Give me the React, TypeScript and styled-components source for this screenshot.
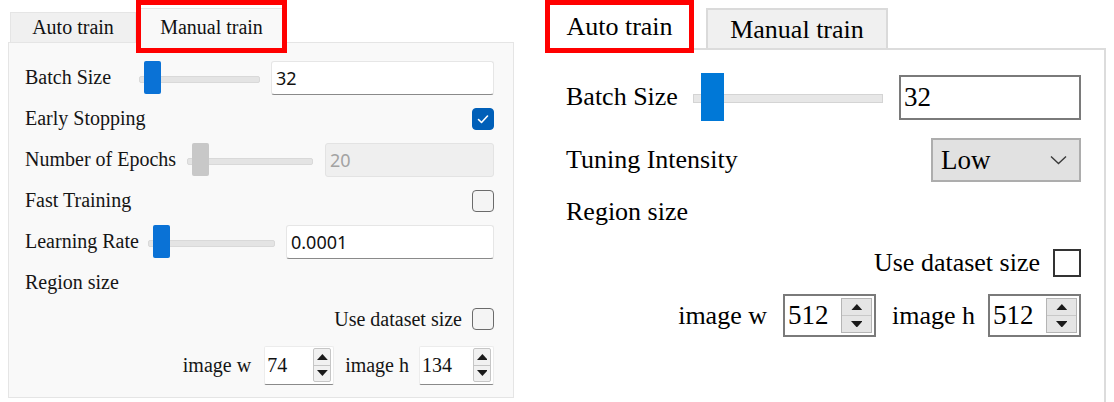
import React from 'react';
import styled, { createGlobalStyle, css } from 'styled-components';

const Global = createGlobalStyle`
  html, body { margin: 0; padding: 0; background: #fff; }
  body { font-family: "Liberation Serif", "Times New Roman", serif; color: #000; }
  * { box-sizing: border-box; }
`;

const Page = styled.div`
  display: flex;
  align-items: flex-start;
  width: 1114px;
  height: 402px;
  overflow: hidden;
  background: #fff;
`;

/* ---------- shared ---------- */
const Highlight = css<{ $hl?: boolean }>`
  ${(p) =>
    p.$hl &&
    css`
      &::after {
        content: '';
        position: absolute;
        border: 5px solid #f00;
        pointer-events: none;
      }
    `}
`;

const UpTri = ({ s = 1 }: { s?: number }) => (
  <svg width={9 * s} height={5 * s} viewBox="0 0 9 5">
    <polygon points="0,5 4.5,0 9,5" fill="#1a1a1a" />
  </svg>
);
const DownTri = ({ s = 1 }: { s?: number }) => (
  <svg width={9 * s} height={5 * s} viewBox="0 0 9 5">
    <polygon points="0,0 9,0 4.5,5" fill="#1a1a1a" />
  </svg>
);

/* ---------- left (fluent style) ---------- */
const LeftPane = styled.section`
  margin-left: 8px;
  width: 506px;
  display: flex;
  flex-direction: column;
`;

const LeftTabs = styled.div`
  display: flex;
  align-items: flex-end;
  height: 42px;
  padding-left: 2px;
`;

const LeftTab = styled.div<{ $active?: boolean; $hl?: boolean }>`
  position: relative;
  display: flex;
  align-items: center;
  justify-content: center;
  font-size: 20px;
  color: #111;
  border: 1px solid #e5e5e5;
  border-bottom: none;
  ${(p) =>
    p.$active
      ? css`
          width: 151px;
          height: 35px;
          margin-bottom: -1px;
          padding-top: 2px;
          background: #f9f9f9;
          z-index: 1;
        `
      : css`
          width: 126px;
          height: 30px;
          background: #f0f0f0;
        `}
  ${Highlight}
  &::after {
    top: -9px;
    bottom: -10px;
    left: -1px;
    right: -1px;
  }
`;

const LeftPanel = styled.div`
  height: 356px;
  border: 1px solid #e5e5e5;
  background: #f9f9f9;
  padding: 14px 19px 0 16px;
  display: flex;
  flex-direction: column;
`;

const LRow = styled.div<{ $h?: number; $mt?: number; $end?: boolean }>`
  display: flex;
  align-items: center;
  height: ${(p) => p.$h ?? 41}px;
  margin-top: ${(p) => p.$mt ?? 0}px;
  justify-content: ${(p) => (p.$end ? 'flex-end' : 'space-between')};
`;

const LLabel = styled.span<{ $w?: number; $ml?: number }>`
  font-size: 20px;
  color: #151515;
  white-space: nowrap;
  flex-shrink: 0;
  ${(p) => p.$w && `width: ${p.$w}px;`}
  margin-left: ${(p) => p.$ml ?? 0}px;
`;

const LSlider = styled.div<{ $w: number }>`
  position: relative;
  width: ${(p) => p.$w}px;
  height: 34px;
  flex-shrink: 0;
  display: flex;
  align-items: center;
  &::before {
    content: '';
    position: absolute;
    left: 0;
    right: 0;
    top: 50%;
    height: 5px;
    margin-top: -2px;
    background: #e4e4e4;
    border: 1px solid #d9d9d9;
    border-radius: 2px;
  }
`;

const LThumb = styled.div<{ $disabled?: boolean }>`
  position: relative;
  margin-left: 5px;
  width: 17px;
  height: 33px;
  border-radius: 2px;
  background: ${(p) => (p.$disabled ? '#c8c8c8' : '#0a72d6')};
`;

const LInput = styled.div<{ $disabled?: boolean; $gap: number }>`
  flex: 1;
  margin-left: ${(p) => p.$gap}px;
  height: 34px;
  display: flex;
  align-items: center;
  padding-left: 4px;
  font-family: "Noto Sans", "Open Sans", sans-serif;
  font-size: 18px;
  border-radius: 3px;
  ${(p) =>
    p.$disabled
      ? css`
          background: #efefef;
          border: 1px solid #e3e3e3;
          color: #a3a3a3;
        `
      : css`
          background: #fff;
          border: 1px solid #e6e6e6;
          border-bottom-color: #8a8a8a;
          color: #111;
        `}
`;

const LCheck = styled.span<{ $checked?: boolean; $ml?: number }>`
  width: 22px;
  height: 22px;
  border-radius: 4px;
  display: flex;
  align-items: center;
  justify-content: center;
  flex-shrink: 0;
  margin-left: ${(p) => p.$ml ?? 0}px;
  ${(p) =>
    p.$checked
      ? css`
          background: #005fb8;
          border: 1px solid #005fb8;
        `
      : css`
          background: #f4f4f4;
          border: 1px solid #6b6b6b;
        `}
`;

const LSpin = styled.div<{ $w: number; $ml: number }>`
  width: ${(p) => p.$w}px;
  margin-left: ${(p) => p.$ml}px;
  height: 39px;
  display: flex;
  align-items: center;
  justify-content: space-between;
  padding: 0 2px 0 2px;
  background: #fff;
  border: 1px solid #ececec;
  border-bottom: 1px solid #8a8a8a;
  border-radius: 2px;
  font-size: 20px;
  color: #111;
`;

const LSpinBtn = styled.div`
  width: 18px;
  height: 34px;
  display: flex;
  flex-direction: column;
  border: 1px solid #c6c6c6;
  border-radius: 2px;
  background: #f1f1f1;
`;

const SpinHalf = styled.div<{ $bottom?: boolean }>`
  flex: 1;
  display: flex;
  align-items: center;
  justify-content: center;
  ${(p) => p.$bottom && 'border-top: 1px solid #c6c6c6;'}
`;

/* ---------- right (classic style) ---------- */
const RightPane = styled.section`
  margin-left: 31px;
  width: 561px;
  display: flex;
  flex-direction: column;
`;

const RightTabs = styled.div`
  display: flex;
  align-items: flex-end;
  height: 48px;
`;

const RightTab = styled.div<{ $active?: boolean; $hl?: boolean }>`
  position: relative;
  display: flex;
  align-items: center;
  justify-content: center;
  font-size: 26px;
  color: #000;
  ${(p) =>
    p.$active
      ? css`
          width: 149px;
          height: 48px;
          padding-top: 6px;
          background: #fff;
        `
      : css`
          width: 182px;
          height: 40px;
          margin-left: 12px;
          padding-top: 2px;
          background: #f0f0f0;
          border: 2px solid #dadada;
          border-bottom: none;
        `}
  ${Highlight}
  &::after {
    top: 0;
    bottom: -5px;
    left: 0;
    right: 0;
  }
`;

const RightPanel = styled.div`
  height: 354px;
  background: #fff;
  border-top: 2px solid #dcdcdc;
  border-right: 2px solid #dcdcdc;
  padding: 23px 23px 0 21px;
  display: flex;
  flex-direction: column;
`;

const RRow = styled.div<{ $h: number; $mt?: number; $end?: boolean }>`
  display: flex;
  align-items: center;
  height: ${(p) => p.$h}px;
  margin-top: ${(p) => p.$mt ?? 0}px;
  justify-content: ${(p) => (p.$end ? 'flex-end' : 'space-between')};
`;

const RLabel = styled.span<{ $w?: number; $ml?: number }>`
  font-size: 26px;
  color: #000;
  white-space: nowrap;
  flex-shrink: 0;
  ${(p) => p.$w && `width: ${p.$w}px;`}
  margin-left: ${(p) => p.$ml ?? 0}px;
`;

const RSlider = styled.div`
  position: relative;
  width: 190px;
  height: 48px;
  flex-shrink: 0;
  display: flex;
  align-items: center;
  &::before {
    content: '';
    position: absolute;
    left: 0;
    right: 0;
    top: 50%;
    height: 7px;
    margin-top: -3px;
    background: #e7e7e7;
    border: 1px solid #d4d4d4;
  }
`;

const RThumb = styled.div`
  position: relative;
  margin-left: 8px;
  width: 23px;
  height: 48px;
  background: #0078d7;
`;

const RInput = styled.div`
  flex: 1;
  margin-left: 16px;
  height: 45px;
  display: flex;
  align-items: center;
  padding-left: 3px;
  border: 2px solid #7a7a7a;
  font-size: 27px;
  background: #fff;
`;

const RSelect = styled.div`
  width: 150px;
  height: 44px;
  display: flex;
  align-items: center;
  justify-content: space-between;
  padding: 0 12px 0 8px;
  background: #e1e1e1;
  border: 2px solid #adadad;
  font-size: 27px;
`;

const RCheck = styled.span<{ $ml: number }>`
  width: 28px;
  height: 28px;
  margin-left: ${(p) => p.$ml}px;
  border: 2px solid #333;
  background: #fff;
  flex-shrink: 0;
`;

const RSpin = styled.div<{ $ml: number }>`
  width: 93px;
  height: 43px;
  margin-left: ${(p) => p.$ml}px;
  display: flex;
  align-items: center;
  justify-content: space-between;
  padding: 0 2px 0 3px;
  border: 2px solid #7a7a7a;
  background: #fff;
  font-size: 27px;
`;

const RSpinBtn = styled.div`
  width: 31px;
  height: 35px;
  display: flex;
  flex-direction: column;
  background: #e5e5e5;
  border: 1px solid #b5b5b5;
`;

const RSpinHalf = styled.div<{ $bottom?: boolean }>`
  flex: 1;
  display: flex;
  align-items: center;
  justify-content: center;
  ${(p) => p.$bottom && 'border-top: 1px solid #c8c8c8;'}
`;

const Chevron = () => (
  <svg width="17" height="10" viewBox="0 0 17 10">
    <polyline points="1,1.5 8.5,8.5 16,1.5" fill="none" stroke="#3a3a3a" strokeWidth="1.4" />
  </svg>
);

const Check = () => (
  <svg width="14" height="14" viewBox="0 0 14 14">
    <polyline
      points="2.5,7.5 5.5,10.5 11.5,4"
      fill="none"
      stroke="#fff"
      strokeWidth="1.6"
      strokeLinecap="round"
      strokeLinejoin="round"
    />
  </svg>
);

const LeftSpin = ({ value, w, ml }: { value: string; w: number; ml: number }) => (
  <LSpin $w={w} $ml={ml}>
    <span>{value}</span>
    <LSpinBtn>
      <SpinHalf>
        <UpTri s={1.2} />
      </SpinHalf>
      <SpinHalf $bottom>
        <DownTri s={1.2} />
      </SpinHalf>
    </LSpinBtn>
  </LSpin>
);

const RightSpin = ({ value, ml }: { value: string; ml: number }) => (
  <RSpin $ml={ml}>
    <span>{value}</span>
    <RSpinBtn>
      <RSpinHalf>
        <UpTri s={1.3} />
      </RSpinHalf>
      <RSpinHalf $bottom>
        <DownTri s={1.3} />
      </RSpinHalf>
    </RSpinBtn>
  </RSpin>
);

export default function App() {
  return (
    <>
      <Global />
      <Page>
        <LeftPane>
          <LeftTabs>
            <LeftTab>Auto train</LeftTab>
            <LeftTab $active $hl>
              Manual train
            </LeftTab>
          </LeftTabs>
          <LeftPanel>
            <LRow>
              <LLabel $w={114}>Batch Size</LLabel>
              <LSlider $w={121}>
                <LThumb />
              </LSlider>
              <LInput $gap={11}>32</LInput>
            </LRow>
            <LRow>
              <LLabel>Early Stopping</LLabel>
              <LCheck $checked>
                <Check />
              </LCheck>
            </LRow>
            <LRow>
              <LLabel $w={162}>Number of Epochs</LLabel>
              <LSlider $w={126}>
                <LThumb $disabled />
              </LSlider>
              <LInput $gap={12} $disabled>
                20
              </LInput>
            </LRow>
            <LRow>
              <LLabel>Fast Training</LLabel>
              <LCheck />
            </LRow>
            <LRow>
              <LLabel $w={123}>Learning Rate</LLabel>
              <LSlider $w={127}>
                <LThumb />
              </LSlider>
              <LInput $gap={11}>0.0001</LInput>
            </LRow>
            <LRow>
              <LLabel>Region size</LLabel>
            </LRow>
            <LRow $h={32} $end>
              <LLabel>Use dataset size</LLabel>
              <LCheck $ml={10} />
            </LRow>
            <LRow $h={40} $mt={10} $end>
              <LLabel>image w</LLabel>
              <LeftSpin value="74" w={70} ml={13} />
              <LLabel $ml={11}>image h</LLabel>
              <LeftSpin value="134" w={75} ml={10} />
            </LRow>
          </LeftPanel>
        </LeftPane>

        <RightPane>
          <RightTabs>
            <RightTab $active $hl>
              Auto train
            </RightTab>
            <RightTab>Manual train</RightTab>
          </RightTabs>
          <RightPanel>
            <RRow $h={48}>
              <RLabel $w={127}>Batch Size</RLabel>
              <RSlider>
                <RThumb />
              </RSlider>
              <RInput>32</RInput>
            </RRow>
            <RRow $h={44} $mt={17}>
              <RLabel>Tuning Intensity</RLabel>
              <RSelect>
                <span>Low</span>
                <Chevron />
              </RSelect>
            </RRow>
            <RRow $h={30} $mt={15}>
              <RLabel>Region size</RLabel>
            </RRow>
            <RRow $h={28} $mt={22} $end>
              <RLabel>Use dataset size</RLabel>
              <RCheck $ml={13} />
            </RRow>
            <RRow $h={43} $mt={17} $end>
              <RLabel>image w</RLabel>
              <RightSpin value="512" ml={16} />
              <RLabel $ml={16}>image h</RLabel>
              <RightSpin value="512" ml={13} />
            </RRow>
          </RightPanel>
        </RightPane>
      </Page>
    </>
  );
}
